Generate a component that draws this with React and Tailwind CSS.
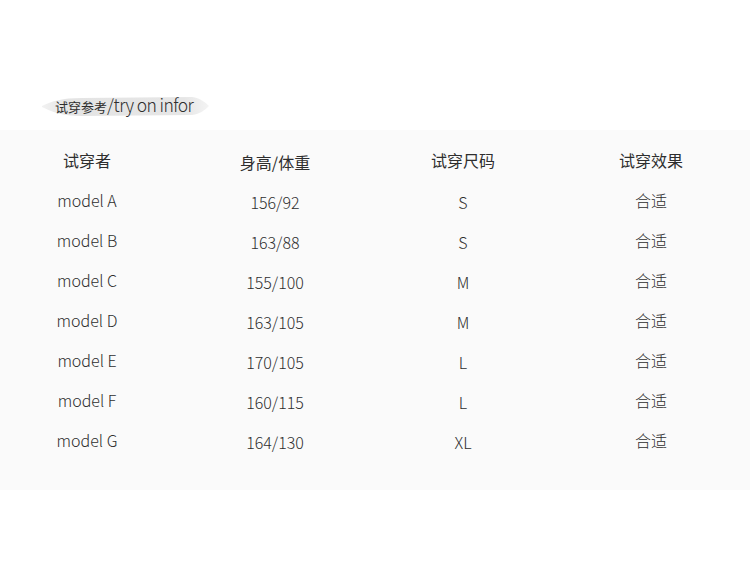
const rows = [
  ["model A", "156/92", "S", "合适"],
  ["model B", "163/88", "S", "合适"],
  ["model C", "155/100", "M", "合适"],
  ["model D", "163/105", "M", "合适"],
  ["model E", "170/105", "L", "合适"],
  ["model F", "160/115", "L", "合适"],
  ["model G", "164/130", "XL", "合适"],
];

function Brush() {
  return (
    <svg className="absolute left-[42px] top-[95px]" width="168" height="24" viewBox="0 0 168 24">
      <defs>
        <linearGradient id="br" x1="0" x2="1" y1="0" y2="0">
          <stop offset="0" stopColor="#f2f2f2" />
          <stop offset="0.15" stopColor="#e4e4e4" />
          <stop offset="0.85" stopColor="#e6e6e6" />
          <stop offset="1" stopColor="#f4f4f4" />
        </linearGradient>
      </defs>
      <path
        d="M0 11 C10 6 20 3 40 3 L150 2 C158 3 163 7 167 11 C163 15 158 19 150 20 L40 21 C20 21 10 17 0 12 Z"
        fill="url(#br)"
      />
    </svg>
  );
}

export default function App() {
  return (
    <div
      className="relative w-[750px] h-[571px] bg-white text-[#2e2e2e] font-light overflow-hidden"
      style={{ fontFamily: '"Noto Sans CJK SC", "Noto Sans", sans-serif' }}
    >
      <Brush />
      {/* title */}
      <div className="relative h-[130px] flex items-end pb-[17px] pl-[55px]">
        <span className="text-[13px] leading-none font-normal">试穿参考</span>
        <span className="text-[17.5px] leading-none tracking-[-0.6px]">/try on infor</span>
      </div>

      {/* table */}
      <div className="bg-[#fafafa] pt-[10px] pb-[30px]">
        <div className="grid grid-cols-[repeat(4,188px)] ml-[-7px] text-[16px]">
          {["试穿者", "身高/体重", "试穿尺码", "试穿效果"].map((h, i) => (
            <div key={h} className={`h-10 flex items-center justify-center font-normal ${i === 1 ? "pt-[3px]" : ""}`}>
              {h}
            </div>
          ))}
          {rows.map((r) =>
            r.map((c, i) => (
              <div
                key={r[0] + i}
                className={`h-10 flex items-center justify-center ${i === 1 || i === 2 ? "pt-[3px]" : ""}`}
              >
                {c}
              </div>
            ))
          )}
        </div>
      </div>
    </div>
  );
}
